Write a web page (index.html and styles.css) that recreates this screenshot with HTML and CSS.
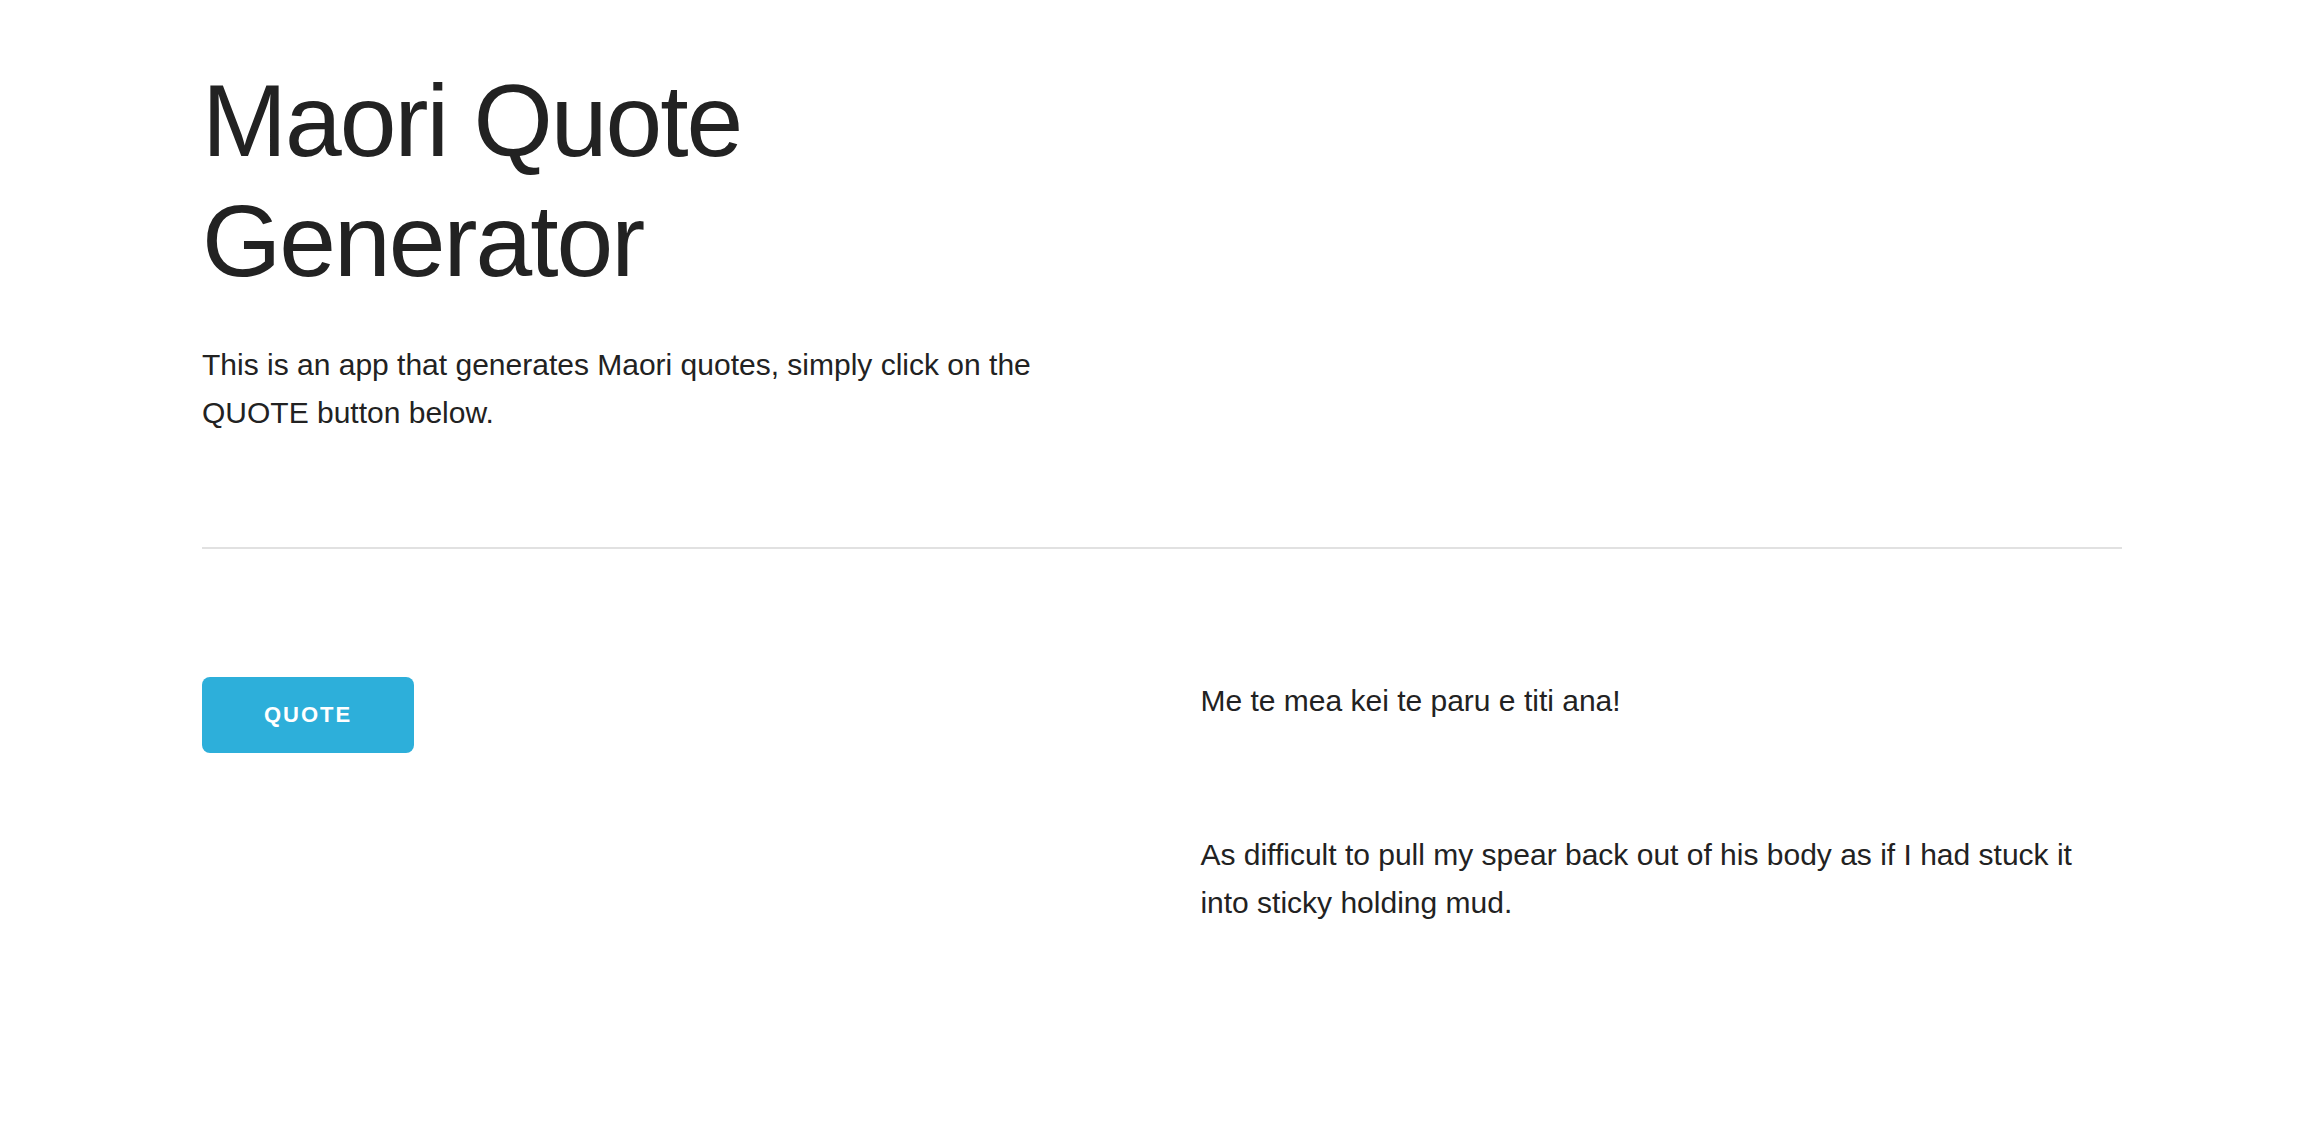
FILE: index.html
```html
<!DOCTYPE html>
<html lang="en">
<head>
<meta charset="utf-8">
<title>Maori Quote Generator</title>
<link rel="stylesheet" href="styles.css">
</head>
<body>
<div class="container">
  <header class="row">
    <div class="half">
      <h1 class="title">Maori Quote Generator</h1>
      <p class="intro">This is an app that generates Maori quotes, simply click on the QUOTE button below.</p>
    </div>
  </header>
  <hr class="divider">
  <section class="row">
    <div class="half">
      <button class="btn-primary">Quote</button>
    </div>
    <div class="half quotes">
      <p class="quote-maori">Me te mea kei te paru e titi ana!</p>
      <p class="quote-english">As difficult to pull my spear back out of his body as if I had stuck it into sticky holding mud.</p>
    </div>
  </section>
</div>
</body>
</html>
```

FILE: styles.css
```css
html, body {
  margin: 0;
  padding: 0;
  background: #fff;
}
body {
  font-family: "Liberation Sans", Arial, Helvetica, sans-serif;
  color: #222;
  font-size: 30px;
  line-height: 48px;
}
.container {
  width: 1920px;
  padding-left: 202px;
}
.row {
  display: flex;
  gap: 76.8px;
}
.half {
  width: 921.6px;
  flex: none;
}
.title {
  margin: 61px 0 40px;
  font-size: 102px;
  line-height: 120px;
  font-weight: 400;
  letter-spacing: -2px;
  width: 600px;
}
.intro {
  margin: 0;
}
.divider {
  margin: 110px 0 0;
  border: 0;
  border-top: 2px solid #e1e1e1;
  height: 0;
}
section.row {
  margin-top: 128px;
}
.btn-primary {
  display: block;
  height: 76px;
  width: 212px;
  padding: 0;
  border: 0;
  border-radius: 8px;
  background: #2dafda;
  color: #fff;
  font-family: "Liberation Sans", Arial, sans-serif;
  font-weight: 700;
  font-size: 22px;
  letter-spacing: 2px;
  text-transform: uppercase;
  line-height: 76px;
  text-align: center;
}
.quotes p {
  margin: 0;
}
.quote-maori {
  margin-bottom: 106px !important;
}
```
